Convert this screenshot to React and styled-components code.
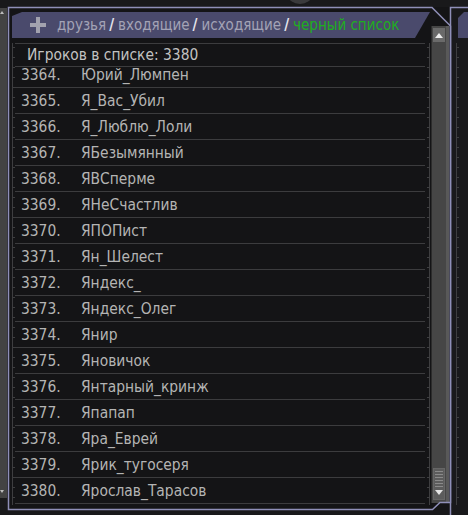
import React from 'react';
import styled, { createGlobalStyle } from 'styled-components';

const players = [
    [3364, 'Юрий_Люмпен'],
    [3365, 'Я_Вас_Убил'],
    [3366, 'Я_Люблю_Лоли'],
    [3367, 'ЯБезымянный'],
    [3368, 'ЯВСперме'],
    [3369, 'ЯНеСчастлив'],
    [3370, 'ЯПОПист'],
    [3371, 'Ян_Шелест'],
    [3372, 'Яндекс_'],
    [3373, 'Яндекс_Олег'],
    [3374, 'Янир'],
    [3375, 'Яновичок'],
    [3376, 'Янтарный_кринж'],
    [3377, 'Япапап'],
    [3378, 'Яра_Еврей'],
    [3379, 'Ярик_тугосеря'],
    [3380, 'Ярослав_Тарасов'],
];

const tabs = [
    { label: 'друзья' },
    { label: 'входящие' },
    { label: 'исходящие' },
    { label: 'черный список', active: true },
];

const App = () => {
    return (
        <Screen>
            <GlobalStyle />
            <Knob />

            <LeftStrip>
                <Arrow viewBox="0 0 4 3"><path d="M0 3 L2 0 L4 3 Z" /></Arrow>
                <Arrow viewBox="0 0 4 3"><path d="M0 0 L2 3 L4 0 Z" /></Arrow>
            </LeftStrip>

            <Panel>
                <MainCol>
                    <Tab>
                        <PlusIcon viewBox="0 0 16 16">
                            <rect x="6" y="0" width="4" height="16" />
                            <rect x="0" y="6" width="16" height="4" />
                        </PlusIcon>
                        {tabs.map((t, i) => (
                            <React.Fragment key={t.label}>
                                <TabLink $active={t.active}>{t.label}</TabLink>
                                {i < tabs.length - 1 && <Slash>/</Slash>}
                            </React.Fragment>
                        ))}
                    </Tab>

                    <ListArea>
                        <Ruler />
                        <Rows>
                            <ListHeader>Игроков в списке: 3380</ListHeader>
                            <Viewport>
                                <RowsInner>
                                    {players.map(([n, name]) => (
                                        <Row key={n}>
                                            <Num>{n}.</Num>
                                            <Name>{name}</Name>
                                        </Row>
                                    ))}
                                </RowsInner>
                            </Viewport>
                        </Rows>
                        <Ruler $right />
                    </ListArea>
                </MainCol>

                <Scrollbar>
                    <ScrollButton>
                        <svg viewBox="0 0 8 5" width="8" height="5"><path d="M0 5 L4 0 L8 5 Z" /></svg>
                    </ScrollButton>
                    <Thumb>
                        <Grip />
                        <svg viewBox="0 0 8 5" width="8" height="5"><path d="M0 0 L4 5 L8 0 Z" /></svg>
                    </Thumb>
                </Scrollbar>
            </Panel>

            <NextPanel>
                <NextTab />
                <Ruler $next />
            </NextPanel>

            <Frame viewBox="0 0 468 515" width="468" height="515">
                <path d="M8.5 509.5 V7.5 H432 L450.5 26 V502.5 H440 L432.5 509.5 Z" />
                <path d="M450.5 515 V7.5 H468" />
            </Frame>
        </Screen>
    );
};

export default App;

const GlobalStyle = createGlobalStyle`
    html, body {
        margin: 0;
        padding: 0;
        background: #19191b;
        overflow: hidden;
    }
    * { box-sizing: border-box; }
`;

const Screen = styled.div`
    position: relative;
    width: 468px;
    height: 515px;
    display: flex;
    background: #19191b;
    font-family: "DejaVu Sans Condensed", "DejaVu Sans", sans-serif;
    font-size: 14px;
    overflow: hidden;
`;

const Knob = styled.div`
    position: absolute;
    left: 288px;
    top: -14px;
    width: 24px;
    height: 18px;
    border-radius: 50%;
    background: #3a3a3c;
`;

const LeftStrip = styled.div`
    width: 7px;
    margin-top: 8px;
    height: 490px;
    background: #434343;
    display: flex;
    flex-direction: column;
    justify-content: space-between;
    padding: 3px 0 5px;
`;

const Arrow = styled.svg`
    width: 4px;
    height: 3px;
    fill: #bdbdbd;
`;

const Panel = styled.div`
    margin-left: 1px;
    margin-top: 7px;
    width: 443px;
    height: 503px;
    background: #141416;
    display: flex;
    padding: 5px 0 0 4px;
`;

const MainCol = styled.div`
    width: 418px;
    display: flex;
    flex-direction: column;
`;

const Tab = styled.div`
    height: 26px;
    background: #4a4a6c;
    clip-path: polygon(0 4px, 10px 0, 418px 0, 403px 100%, 0 100%);
    display: flex;
    align-items: center;
    padding-left: 18px;
    font-size: 15px;
    white-space: nowrap;
`;

const PlusIcon = styled.svg`
    width: 16px;
    height: 16px;
    fill: #a2a2ae;
    margin-right: 11px;
    flex-shrink: 0;
`;

const TabLink = styled.span`
    color: ${p => (p.$active ? '#1fae1f' : '#a3a3b6')};
`;

const Slash = styled.span`
    color: #e6e6ee;
    font-weight: bold;
    margin: 0 4px 0 3px;
`;

const ListArea = styled.div`
    margin-top: 5px;
    height: 462px;
    display: flex;
`;

const Ruler = styled.div`
    width: 3px;
    flex-shrink: 0;
    height: ${p => (p.$next ? '462px' : 'auto')};
    margin-left: ${p => (p.$right ? '2px' : p.$next ? '5px' : '0')};
    background:
        linear-gradient(#3e3e40, #3e3e40) ${p => (p.$right ? '2px' : '0')} 0 / 1px 100% no-repeat,
        repeating-linear-gradient(to bottom, #3e3e40 0 1px, transparent 1px 10px) 0 4px / 3px 100% no-repeat;
`;

const Rows = styled.div`
    flex: 1;
    display: flex;
    flex-direction: column;
    color: #b4b4b4;
`;

const ListHeader = styled.div`
    height: 24px;
    border-top: 1px solid #3c3c3e;
    border-bottom: 1px solid #3c3c3e;
    padding-left: 12px;
    display: flex;
    align-items: center;
    color: #c2c2c2;
    font-size: 15.4px;
`;

const Viewport = styled.div`
    flex: 1;
    overflow: hidden;
`;

const RowsInner = styled.div`
    margin-top: -5px;
`;

const Row = styled.div`
    height: 26px;
    border-bottom: 1px solid #3c3c3e;
    display: flex;
    align-items: center;
    padding-left: 6px;
    font-size: 15.4px;
`;

const Num = styled.span`
    width: 60px;
    flex-shrink: 0;
`;

const Name = styled.span``;

const Scrollbar = styled.div`
    width: 18px;
    margin-left: 1px;
    margin-top: 14px;
    height: 477px;
    background: #464646;
    border-left: 1px solid #2c2c2c;
    box-shadow: inset -3px 0 0 #595959;
    padding: 2px 4px 3px 1px;
    display: flex;
    flex-direction: column;
    justify-content: space-between;
`;

const ScrollButton = styled.div`
    height: 14px;
    background: #6a6a6a;
    display: flex;
    align-items: center;
    justify-content: center;
    fill: #eeeeee;
`;

const Thumb = styled.div`
    height: 32px;
    background: #5c5c5c;
    border: 1px solid #666;
    display: flex;
    flex-direction: column;
    align-items: center;
    padding-top: 2px;
    gap: 3px;
    fill: #e4e4e4;
`;

const Grip = styled.div`
    width: 8px;
    height: 16px;
    background: repeating-linear-gradient(to bottom, #8a8a8a 0 1px, transparent 1px 3px);
`;

const NextPanel = styled.div`
    flex: 1;
    margin-top: 7px;
    display: flex;
    flex-direction: column;
    gap: 5px;
    padding-top: 5px;
`;

const NextTab = styled.div`
    height: 26px;
    margin-left: 7px;
    background: #4a4a6c;
    clip-path: polygon(0 6px, 6px 0, 100% 0, 100% 100%, 0 100%);
`;

const Frame = styled.svg`
    position: absolute;
    left: 0;
    top: 0;
    pointer-events: none;
    fill: none;
    stroke: #8f8fb8;
    stroke-width: 1.5;
`;
